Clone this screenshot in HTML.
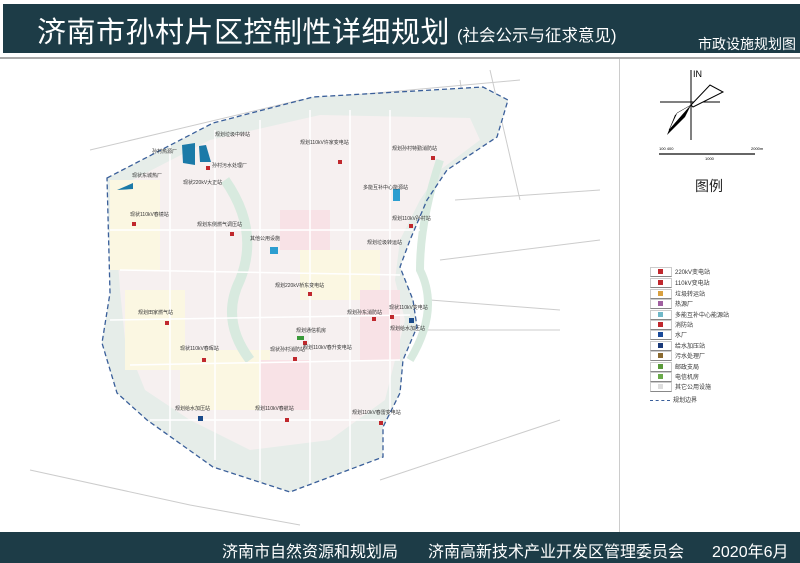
<!DOCTYPE html>
<html><head><meta charset="utf-8"><style>
body{margin:0;width:800px;height:563px;background:#fff;position:relative;overflow:hidden;font-family:"Liberation Sans","Noto Sans CJK SC",sans-serif}
.hdr{position:absolute;left:3px;top:4px;width:797px;height:49px;background:#1d3c47;color:#fff}
.t1{position:absolute;left:34px;top:5px;font-size:29px;letter-spacing:0.5px;white-space:nowrap}
.t2{position:absolute;left:454px;top:18px;font-size:16.5px;white-space:nowrap}
.t3{position:absolute;right:4px;top:30px;font-size:14px;white-space:nowrap}
.ftr{position:absolute;left:0;top:532px;width:800px;height:31px;background:#1d3c47;color:#fff;font-size:16px}
.ftr span{position:absolute;top:6px;white-space:nowrap}
.lg{position:absolute;left:650px;font-size:6px;color:#333;white-space:nowrap}
.lg i{display:inline-block;width:20px;height:8px;border:1px solid #ccc;border-bottom-color:#888;vertical-align:middle;margin-right:3px;position:relative}
.lg i b{position:absolute;left:7px;top:1px;width:5px;height:5px}
</style></head><body>
<div class="hdr"><div class="t1">济南市孙村片区控制性详细规划</div><div class="t2">(社会公示与征求意见)</div><div class="t3">市政设施规划图</div></div>
<div style="position:absolute;left:0;top:57px;width:800px;height:2px;background:#aaa"></div>
<div style="position:absolute;left:619px;top:59px;width:1px;height:473px;background:#ccc"></div>
<svg style="position:absolute;left:0;top:59px" width="619" height="473" viewBox="0 59 619 473">
<g stroke="#ccc" stroke-width="1" fill="none">
<path d="M90 150 L300 100 L520 80"/><path d="M30 470 L190 505 L300 525"/><path d="M380 480 L560 420"/><path d="M420 330 L560 330"/><path d="M430 300 L560 310"/><path d="M440 260 L600 240"/><path d="M455 200 L600 190"/><path d="M460 80 L470 150"/><path d="M490 70 L520 200"/>
</g>
<polygon points="107,178 213,123 313,97 483,87 508,100 497,137 447,170 427,200 410,240 400,267 413,300 417,327 403,360 400,393 383,427 383,457 290,492 213,467 147,420 117,393 102,343 110,293" fill="#e6ede9"/>
<polygon points="113,190 210,140 320,115 470,118 480,140 440,170 420,200 400,240 395,280 405,320 395,360 385,400 330,440 250,450 190,420 145,390 125,340 120,290" fill="#f6f0f0"/>
<rect x="110" y="180" width="50" height="90" fill="#fbf7e2"/>
<rect x="125" y="290" width="60" height="80" fill="#fbf7e2"/>
<rect x="180" y="350" width="90" height="60" fill="#fbf7e2"/>
<rect x="260" y="360" width="50" height="50" fill="#f8e2e6"/>
<rect x="300" y="250" width="80" height="50" fill="#fbf7e2"/>
<rect x="360" y="290" width="40" height="70" fill="#f8e2e6"/>
<rect x="280" y="210" width="50" height="40" fill="#f8e2e6"/>
<path d="M225 180 Q260 230 240 280 Q220 320 250 360" stroke="#d8eadf" stroke-width="10" fill="none"/>
<path d="M440 160 Q420 220 420 270 Q440 310 410 360" stroke="#d8eadf" stroke-width="8" fill="none"/>
<g stroke="#fff" stroke-width="1.5" fill="none">
<path d="M110 230 L420 230"/><path d="M120 270 L400 275"/><path d="M110 320 L410 315"/><path d="M130 365 L400 360"/><path d="M150 420 L380 420"/>
<path d="M170 140 L170 450"/><path d="M215 130 L215 460"/><path d="M260 120 L260 480"/><path d="M310 110 L310 490"/><path d="M350 110 L350 470"/><path d="M390 110 L390 440"/>
</g>
<polygon points="107,178 213,123 313,97 483,87 508,100 497,137 447,170 427,200 410,240 400,267 413,300 417,327 403,360 400,393 383,427 383,457 290,492 213,467 147,420 117,393 102,343 110,293" fill="none" stroke="#3a5f9a" stroke-width="1.3" stroke-dasharray="5,3"/>
<polygon points="182,145 195,143 195,165 183,163" fill="#1b7aa8"/>
<polygon points="199,146 206,145 211,162 200,162" fill="#1b7aa8"/>
<polygon points="117,190 133,183 133,189" fill="#1b7aa8"/>
<rect x="393" y="189" width="7" height="12" fill="#2c9ed0"/>
<rect x="270" y="247" width="8" height="7" fill="#2c9ed0"/>
<g fill="#c0282d"><rect x="206" y="166" width="4" height="4"/><rect x="338" y="160" width="4" height="4"/><rect x="431" y="156" width="4" height="4"/><rect x="132" y="222" width="4" height="4"/><rect x="230" y="232" width="4" height="4"/><rect x="409" y="224" width="4" height="4"/><rect x="308" y="292" width="4" height="4"/><rect x="165" y="321" width="4" height="4"/><rect x="390" y="315" width="4" height="4"/><rect x="372" y="317" width="4" height="4"/><rect x="202" y="358" width="4" height="4"/><rect x="293" y="357" width="4" height="4"/><rect x="303" y="341" width="4" height="4"/><rect x="285" y="418" width="4" height="4"/><rect x="379" y="421" width="4" height="4"/></g>
<rect x="198" y="416" width="5" height="5" fill="#1a4a8a"/><rect x="409" y="318" width="5" height="5" fill="#1a4a8a"/>
<rect x="297" y="336" width="7" height="4" fill="#3a9a3a"/>
<g font-size="5" fill="#333"><text x="215" y="136">规划垃圾中转站</text><text x="300" y="144">规划110kV许家变电站</text><text x="392" y="150">规划孙村特勤消防站</text><text x="152" y="153">孙村热源厂</text><text x="212" y="167">孙村污水处理厂</text><text x="132" y="177">现状东城热厂</text><text x="183" y="184">现状220kV大正站</text><text x="363" y="189">多能互补中心能源站</text><text x="130" y="216">现状110kV春镜站</text><text x="197" y="226">规划东侧燃气调压站</text><text x="392" y="220">规划110kV孙村站</text><text x="250" y="240">其他公用设施</text><text x="367" y="244">规划垃圾转运站</text><text x="275" y="287">规划220kV桥东变电站</text><text x="138" y="314">规划田家燃气站</text><text x="347" y="314">规划孙东消防站</text><text x="389" y="309">现状110kV变电站</text><text x="390" y="330">规划给水加压站</text><text x="296" y="332">规划通信机房</text><text x="180" y="350">现状110kV春晖站</text><text x="270" y="351">现状孙村消防站</text><text x="303" y="349">规划110kV春升变电站</text><text x="175" y="410">规划给水加压站</text><text x="255" y="410">规划110kV春航站</text><text x="352" y="414">规划110kV春雷变电站</text></g>
</svg>
<svg style="position:absolute;left:655px;top:65px" width="130" height="95">
<line x1="36" y1="5" x2="36" y2="75" stroke="#000" stroke-width="1"/><line x1="5" y1="37" x2="65" y2="37" stroke="#000"/>
<text x="38" y="12" font-size="9" font-family="Liberation Sans">IN</text>
<polygon points="36,40 55,20 68,27 38,42" fill="#fff" stroke="#000"/><polygon points="36,40 20,50 12,70 30,52" fill="#000"/><polygon points="36,40 22,48 14,65" fill="#fff" stroke="#000" stroke-width=".5"/>
<line x1="4" y1="89" x2="100" y2="89" stroke="#333" stroke-width="1.5"/>
<text x="4" y="85" font-size="4">100 400</text><text x="50" y="95" font-size="4">1000</text><text x="96" y="85" font-size="4">2000m</text>
</svg>
<div style="position:absolute;left:695px;top:176px;font-size:14px;color:#222">图例</div>
<div class="lg" style="top:267px"><i><b style="background:#c0282d"></b></i>220kV变电站</div>
<div class="lg" style="top:278px"><i><b style="background:#c0282d"></b></i>110kV变电站</div>
<div class="lg" style="top:289px"><i><b style="background:#d9a040"></b></i>垃圾转运站</div>
<div class="lg" style="top:299px"><i><b style="background:#a060a0"></b></i>热源厂</div>
<div class="lg" style="top:310px"><i><b style="background:#70b8c8"></b></i>多能互补中心能源站</div>
<div class="lg" style="top:320px"><i><b style="background:#c0282d"></b></i>消防站</div>
<div class="lg" style="top:330px"><i><b style="background:#1a4a9a"></b></i>水厂</div>
<div class="lg" style="top:341px"><i><b style="background:#1a3a7a"></b></i>给水加压站</div>
<div class="lg" style="top:351px"><i><b style="background:#8a6a30"></b></i>污水处理厂</div>
<div class="lg" style="top:362px"><i><b style="background:#5a9a3a"></b></i>邮政支局</div>
<div class="lg" style="top:372px"><i><b style="background:#6aaa4a"></b></i>电信机房</div>
<div class="lg" style="top:382px"><i><b style="background:#ddd"></b></i>其它公用设施</div>
<div class="lg" style="top:395px"><span style="display:inline-block;width:20px;border-top:1px dashed #3a5f9a;vertical-align:middle;margin-right:3px"></span>规划边界</div>
<div class="ftr"><span style="left:222px">济南市自然资源和规划局</span><span style="left:428px">济南高新技术产业开发区管理委员会</span><span style="left:712px">2020年6月</span></div>
</body></html>
